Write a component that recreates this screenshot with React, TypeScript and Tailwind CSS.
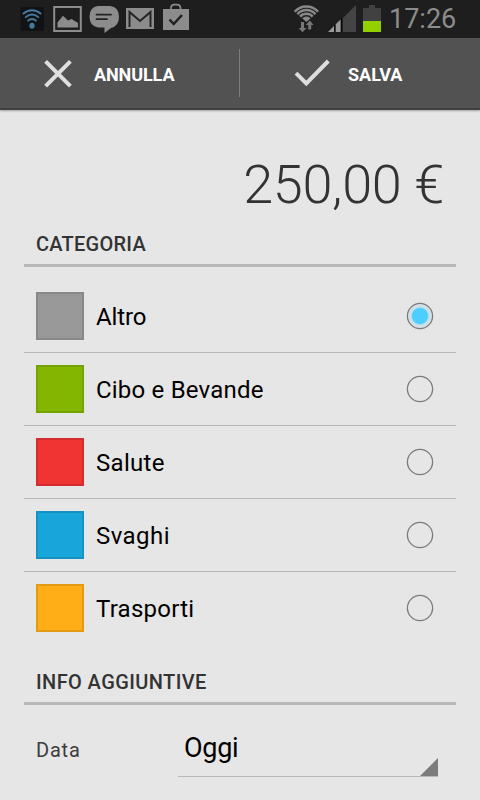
import React from "react";

const categories = [
  { name: "Altro", swatch: "bg-[#999999] border-[#888888]", text: "tracking-[-0.1px]", checked: true },
  { name: "Cibo e Bevande", swatch: "bg-[#83b600] border-[#75a300]", text: "tracking-[0.2px]", checked: false },
  { name: "Salute", swatch: "bg-[#f03333] border-[#d52d2d]", text: "tracking-[0.3px]", checked: false },
  { name: "Svaghi", swatch: "bg-[#17a5da] border-[#1493c3]", text: "tracking-[0.45px]", checked: false },
  { name: "Trasporti", swatch: "bg-[#ffae18] border-[#e39b16]", text: "tracking-[0.25px]", checked: false },
];

function StatusBar() {
  return (
    <header className="flex h-[38px] items-start justify-between bg-[#1e1e1e]">
      <svg width="200" height="38" viewBox="0 0 200 38" fill="none">
        <rect x="20.5" y="7" width="23.5" height="24" rx="2" fill="#101214" />
        <g stroke="#47799b" strokeWidth="2" strokeLinecap="round">
          <path d="M23.5 13.5A12.5 12.5 0 0 1 40.5 13.5" />
          <path d="M25.8 17.1A9 9 0 0 1 38.2 17.1" />
          <path d="M28.2 20.6A5.6 5.6 0 0 1 35.8 20.6" />
        </g>
        <ellipse cx="32" cy="25.7" rx="2.6" ry="3" fill="#47799b" />
        <rect x="54.2" y="7" width="26.6" height="24" stroke="#8c8c8c" strokeWidth="2" />
        <path d="M57.5 27.6V22.5L63 15.8L68 20.5L71.5 19L78 23V27.6Z" fill="#8c8c8c" />
        <path d="M98 6H110Q119 7 119 16.5Q119 26 111 28L104.5 33V27.5H98Q89.5 26 89.5 16.5Q89.5 7 98 6Z" fill="#8c8c8c" />
        <path d="M96.5 14.7H111M96.5 19.2H107" stroke="#222" strokeWidth="1.7" strokeLinecap="round" />
        <rect x="126" y="8" width="28" height="21" fill="#8c8c8c" />
        <path d="M129.5 27V12L140 21L150.5 12V27" stroke="#252525" strokeWidth="2" />
        <path d="M163 9H189V30H163Z" fill="#8c8c8c" />
        <path d="M171 10V8.5Q171 4.7 174 4.7H177Q180.5 4.7 180.5 8.5V10" stroke="#8c8c8c" strokeWidth="1.7" />
        <path d="M169.5 19.5L173.7 24L182 15" stroke="#202020" strokeWidth="2.5" />
      </svg>
      <div className="flex">
        <svg width="98" height="38" viewBox="290 0 98 38" fill="none">
          <g stroke="#888" strokeWidth="2.5">
            <path d="M294.7 11.8A15.4 15.4 0 0 1 318.1 11.8" />
            <path d="M297.4 14.2A11.9 11.9 0 0 1 315.4 14.2" />
            <path d="M300.1 16.6A8.4 8.4 0 0 1 312.7 16.6" />
          </g>
          <path d="M302.2 18.3A6 6 0 0 1 310.6 18.3L306.4 22Z" fill="#888" />
          <path d="M301 22H304V28H306.5L302.5 32.2L298.7 28H301Z" fill="#777" />
          <path d="M308.2 29.5V25H305.8L309.8 20.5L313.6 25H311.2V29.5Z" fill="#777" />
          <path d="M342.5 18.5L356 5V32H342.5Z" fill="#444" />
          <path d="M328 32L334.4 25.5V32Z" fill="#999" />
          <path d="M335.5 24.5L340.8 19.2V32H335.5Z" fill="#999" />
          <path d="M334.2 25.5L335.4 24.3V32H334.2ZM340.8 19.2L342.3 17.7V32H340.8Z" fill="#050505" />
          <path d="M363 8H369V5H375V8H381V21H363Z" fill="#414141" />
          <path d="M363 21H381V32H363Z" fill="#92d000" />
        </svg>
        <span className="w-[92px] pl-[1px] text-[27px] leading-[38px] text-[#8c8c8c]">17:26</span>
      </div>
    </header>
  );
}

function ActionBar() {
  return (
    <div className="flex h-[72px] items-center border-b-2 border-[#404040] bg-[#525252] text-[18px] font-bold leading-none text-white shadow-[0_1px_2px_rgba(0,0,0,0.3)]">
      <button className="flex h-full w-[239px] items-center pl-[43px]">
        <svg className="mt-0.5" width="30" height="30" viewBox="0 0 30 30" fill="none" stroke="#dedede" strokeWidth="4">
          <path d="M2.6 2.3L27.4 27.1M27.4 2.3L2.6 27.1" />
        </svg>
        <span className="ml-[21px] mt-[3px] tracking-[-0.1px]">ANNULLA</span>
      </button>
      <div className="h-12 w-px bg-[#7c7c7c]" />
      <button className="flex h-full items-center pl-[54px]">
        <svg className="mt-0.5" width="36" height="30" viewBox="0 0 36 30" fill="none" stroke="#dedede" strokeWidth="4">
          <path d="M2 14.2L12.3 24.5L34.3 2" />
        </svg>
        <span className="ml-[18px] mt-[3px]">SALVA</span>
      </button>
    </div>
  );
}

function SectionTitle({ className, children }: { className: string; children: React.ReactNode }) {
  return (
    <h2 className={"h-[47px] border-b-[3px] border-[#b8b8b8] pl-3 text-[20px] font-medium leading-[49px] text-[#333] " + className}>
      {children}
    </h2>
  );
}

function Radio({ checked }: { checked: boolean }) {
  return (
    <svg className="ml-auto mr-[22px]" width="28" height="28" viewBox="0 0 28 28">
      <circle cx="14" cy="14" r="12.6" fill={checked ? "#d3e1e6" : "none"} stroke="#7b7b7b" strokeWidth="1.3" />
      {checked && <circle cx="14" cy="14" r="9.2" fill="#a9ddf1" />}
      {checked && <circle cx="14" cy="14" r="8" fill="#4dceff" />}
    </svg>
  );
}

export default function App() {
  return (
    <div className="h-[800px] w-[480px] overflow-hidden bg-[#e6e6e6] font-[Roboto,sans-serif]">
      <StatusBar />
      <ActionBar />
      <main className="px-6">
        <div className="h-[110px] pr-3 pt-[43px] text-right text-[54px] font-light leading-[64px] tracking-[-0.3px] text-[#333]">
          250,00 €
        </div>
        <SectionTitle className="tracking-[0.25px]">CATEGORIA</SectionTitle>
        <ul className="pt-[13px]">
          {categories.map((c) => (
            <li key={c.name} className="flex h-[73px] items-center border-b border-[#b8b8b8] pl-3 last:h-[72px] last:border-b-0">
              <div className={"h-12 w-12 border-2 " + c.swatch} />
              <span className={"ml-3 mt-0.5 text-[24px] leading-none text-black " + c.text}>{c.name}</span>
              <Radio checked={c.checked} />
            </li>
          ))}
        </ul>
        <div className="mt-[14px]">
          <SectionTitle className="tracking-[0.4px]">INFO AGGIUNTIVE</SectionTitle>
        </div>
        <div className="flex">
          <span className="w-[154px] pl-3 pt-[33px] text-[20px] leading-6 tracking-[0.8px] text-[#3c3c3c]">Data</span>
          <div className="flex h-[72px] w-[260px] items-end justify-between border-b border-[#b8b8b8]">
            <span className="pb-[12px] pl-[6px] text-[27px] leading-8 tracking-[-0.3px] text-black">Oggi</span>
            <svg width="18" height="18" viewBox="0 0 18 18">
              <path d="M0 18L18 0V18Z" fill="#7c7c7c" />
            </svg>
          </div>
        </div>
      </main>
    </div>
  );
}
